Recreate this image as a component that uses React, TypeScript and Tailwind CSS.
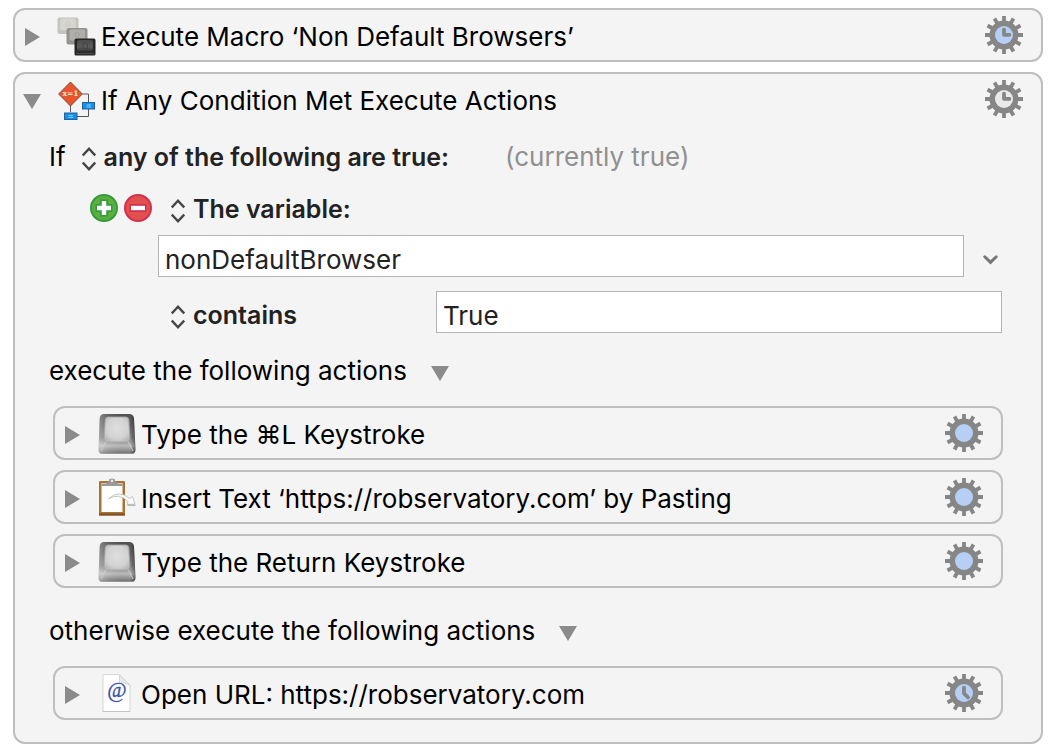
import { useState, type ReactNode } from "react";

type GearKind = "clock" | "plain" | "later";

const TEETH = [0, 30, 60, 90, 120, 150];

function GearIcon({ kind, face }: { kind: GearKind; face: string }) {
  return (
    <svg width="38" height="38" viewBox="0 0 38 38" fill="none">
      {TEETH.map((angle) => (
        <path
          key={angle}
          d="M19 0v38"
          stroke="#868686"
          strokeWidth="3.8"
          transform={`rotate(${angle} 19 19)`}
        />
      ))}
      <circle cx="19" cy="19" r="14.5" fill="#868686" />
      <circle cx="19" cy="19" r="9" fill={face} />
      {kind !== "plain" && (
        <path
          d={kind === "clock" ? "M19 13.6V18.8H24.4" : "M19 13.6V19.4L23 23.4"}
          stroke="#868686"
          strokeWidth="3.8"
          strokeLinecap="round"
          strokeLinejoin="round"
        />
      )}
    </svg>
  );
}

function Triangle({ open }: { open: boolean }) {
  return (
    <svg width="18" height="18" viewBox="0 0 18 18" fill="#8b8b8b">
      <path d={open ? "M0 2H18L9 17Z" : "M2 0L17 9L2 18Z"} />
    </svg>
  );
}

function UpDownIcon() {
  return (
    <svg
      width="14"
      height="24"
      viewBox="0 0 14 24"
      fill="none"
      stroke="#454545"
      strokeWidth="2.4"
    >
      <path d="M0.8 8.4L7 1.8L13.2 8.4M0.8 15.6L7 22.2L13.2 15.6" />
    </svg>
  );
}

function MacroIcon() {
  return (
    <svg width="40" height="40" viewBox="0 0 40 40">
      <defs>
        <linearGradient id="capDark" x1="0" y1="0" x2="0" y2="1">
          <stop offset="0" stopColor="#4a4a4a" />
          <stop offset="0.6" stopColor="#5c5c5c" />
          <stop offset="1" stopColor="#333" />
        </linearGradient>
      </defs>
      <rect x="0.5" y="1.5" width="21" height="16.5" rx="2" fill="#c4c3be" />
      <rect x="3" y="2.5" width="16" height="11.5" rx="2" fill="#d6d5d0" />
      <rect x="9" y="6" width="4" height="4" rx="1.5" fill="none" stroke="#c8c7c2" />
      <rect x="9.5" y="12" width="21" height="16.5" rx="2" fill="#94938f" />
      <rect x="12.5" y="13.5" width="15.5" height="11" rx="2" fill="#b0afab" />
      <rect x="18" y="16.5" width="4" height="4" rx="1.5" fill="none" stroke="#9e9d99" />
      <rect x="17.5" y="22.5" width="21" height="17" rx="1.5" fill="#262626" />
      <rect x="20" y="24" width="16" height="11.5" rx="2" fill="url(#capDark)" />
      <rect x="26" y="27" width="4.5" height="6" rx="2" fill="none" stroke="#444" />
      <path d="M19.5 37.5H37" stroke="#484848" strokeWidth="1.4" />
    </svg>
  );
}

function ConditionIcon() {
  return (
    <svg width="40" height="40" viewBox="0 0 40 40">
      <path
        d="M13.5 25V32M25.5 14H31.5V22M31.5 29V36.5H20"
        fill="none"
        stroke="#555"
      />
      <path d="M13.5 2L25.3 14L13.5 26L1.7 14Z" fill="#eb552d" stroke="#7a4a3c" />
      <text
        x="13.6"
        y="16.4"
        textAnchor="middle"
        fontSize="7.5"
        fontWeight="700"
        fill="#ffe5d9"
        fontFamily="'DejaVu Serif', serif"
      >
        x=1
      </text>
      <rect x="25.5" y="22.5" width="12" height="6.5" fill="#0a94fb" stroke="#2b5f8f" />
      <rect x="7.5" y="33" width="12.5" height="6.5" fill="#0a94fb" stroke="#2b5f8f" />
      <path d="M29.5 25H34M29.5 27H34M11.5 35.5H16M11.5 37.5H16" stroke="#8ccbff" />
    </svg>
  );
}

function KeyIcon() {
  return (
    <svg width="40" height="40" viewBox="0 0 40 40">
      <defs>
        <linearGradient id="keyBody" x1="0" y1="0" x2="0" y2="1">
          <stop offset="0" stopColor="#505050" />
          <stop offset="0.6" stopColor="#838383" />
          <stop offset="0.8" stopColor="#bcbcbc" />
          <stop offset="1" stopColor="#707070" />
        </linearGradient>
        <linearGradient id="keySides" x1="0" y1="0" x2="1" y2="0">
          <stop offset="0" stopColor="#fff" stopOpacity="0.3" />
          <stop offset="0.25" stopColor="#fff" stopOpacity="0.1" />
          <stop offset="0.85" stopColor="#000" stopOpacity="0" />
          <stop offset="1" stopColor="#000" stopOpacity="0.4" />
        </linearGradient>
        <radialGradient id="keyTop" cx="0.5" cy="0.45" r="0.6">
          <stop offset="0" stopColor="#dfdfdf" />
          <stop offset="0.7" stopColor="#d2d2d2" />
          <stop offset="1" stopColor="#bababa" />
        </radialGradient>
      </defs>
      <path
        d="M7 0H32Q36.5 0 37 4.5L38.5 35Q38.7 39.8 35 39.8H5Q1.3 39.8 1.5 35L2.7 4.5Q3 0 7 0Z"
        fill="url(#keyBody)"
      />
      <path
        d="M7 0H32Q36.5 0 37 4.5L38.5 35Q38.7 39.8 35 39.8H5Q1.3 39.8 1.5 35L2.7 4.5Q3 0 7 0Z"
        fill="url(#keySides)"
      />
      <path d="M8.5 28L4 37M31.5 28L36 37" stroke="#cfcfcf" strokeWidth="1" />
      <path
        d="M11 3H29Q31.6 3 31.8 6L32.8 23Q33 28 29 28H11Q7 28 7.2 23L8.2 6Q8.4 3 11 3Z"
        fill="url(#keyTop)"
        stroke="#a8a8a8"
        strokeWidth="0.8"
      />
    </svg>
  );
}

function ClipboardIcon() {
  return (
    <svg width="40" height="40" viewBox="0 0 40 40">
      <rect x="2" y="3" width="26" height="34.5" rx="1" fill="#a87336" />
      <path d="M2 35.5H28V37.5H2Z" fill="#7b4f20" />
      <path d="M4.5 5H25.5V34H4.5Z" fill="#fff" />
      <path d="M4.5 8V5.5H9L12 3.5V1.5Q15 -0.5 18 1.5V3.5L21 5.5H25.5V8Z" fill="#999" />
      <circle cx="15" cy="2.8" r="1.2" fill="#eee" />
      <path
        d="M11.5 20.8Q22 11 32.5 20.5L35.5 18.5L38 26L30.5 26.5L31 23.5Q22 14.5 11.5 20.8Z"
        fill="#fbfbfb"
        stroke="#b8b8b8"
        strokeWidth="0.8"
      />
      <path d="M30.5 27.2H38.5" stroke="#9b9b9b" />
    </svg>
  );
}

function UrlIcon() {
  return (
    <svg width="40" height="40" viewBox="0 0 40 40">
      <path d="M6 0.5H22L33 11V37.5H6Z" fill="#fff" stroke="#d5d5d5" />
      <path d="M5.5 37.5H33.5" stroke="#c4c4c4" />
      <path d="M22.5 1L32.5 11Q27 8 22.5 9Z" fill="#e9e9e9" stroke="#cfcfcf" strokeWidth="0.8" />
      <text
        x="19.8"
        y="23"
        textAnchor="middle"
        fontSize="21"
        fill="#3a4fa5"
        stroke="#3a4fa5"
        strokeWidth="0.3"
        fontFamily="'Liberation Serif', serif"
      >
        @
      </text>
    </svg>
  );
}

interface HeaderProps {
  icon: ReactNode;
  title: string;
  gear: GearKind;
  face?: string;
  defaultOpen?: boolean;
}

function ActionHeader({
  icon,
  title,
  gear,
  face = "#b5cff5",
  defaultOpen = false,
}: HeaderProps) {
  const [open, setOpen] = useState(defaultOpen);

  return (
    <div className="flex h-[50px] items-center justify-between pr-[18px] pl-2">
      <div className="flex min-w-0 items-center pt-1">
        <button
          type="button"
          aria-label={`Toggle ${title}`}
          aria-expanded={open}
          onClick={() => setOpen(!open)}
          className="shrink-0"
        >
          <Triangle open={open} />
        </button>
        <span className="mr-1 ml-4 shrink-0 pb-0.5">{icon}</span>
        <h2 className="truncate">{title}</h2>
      </div>
      <button type="button" aria-label={`Options for ${title}`} className="shrink-0">
        <GearIcon kind={gear} face={face} />
      </button>
    </div>
  );
}

function Card({ children }: { children: ReactNode }) {
  return (
    <section className="rounded-xl border-2 border-[#bebebe] bg-[#f4f4f4]">
      {children}
    </section>
  );
}

function Popup({ label, options }: { label: string; options: string[] }) {
  return (
    <label className="flex items-center gap-2">
      <span className="pt-1">
        <UpDownIcon />
      </span>
      <select
        aria-label={label}
        className="field-sizing-content appearance-none bg-transparent text-[25px] font-semibold text-[#222] outline-none"
      >
        {options.map((option) => (
          <option key={option}>{option}</option>
        ))}
      </select>
    </label>
  );
}

function SectionToggle({ text }: { text: string }) {
  const [open, setOpen] = useState(true);

  return (
    <div className="flex h-[52px] items-center gap-6 pl-[34px]">
      <span>{text}</span>
      <button
        type="button"
        aria-label={`Toggle ${text}`}
        aria-expanded={open}
        onClick={() => setOpen(!open)}
        className="pt-1"
      >
        <Triangle open={open} />
      </button>
    </div>
  );
}

export default function App() {
  const [variable, setVariable] = useState("nonDefaultBrowser");
  const [value, setValue] = useState("True");

  return (
    <main className="flex min-h-screen flex-col gap-[10px] bg-white px-[13px] pt-2 pb-[10px] font-['Inter',sans-serif] text-[26px] leading-8 text-black">
      <Card>
        <ActionHeader
          icon={<MacroIcon />}
          title="Execute Macro ‘Non Default Browsers’"
          gear="clock"
        />
      </Card>

      <Card>
        <ActionHeader
          icon={<ConditionIcon />}
          title="If Any Condition Met Execute Actions"
          gear="clock"
          face="#e9e9e9"
          defaultOpen
        />

        <div className="mt-[7px] flex h-[52px] items-center pl-[34px]">
          <span className="mr-4">If</span>
          <Popup
            label="Match"
            options={["any of the following are true:", "all of the following are true:"]}
          />
          <span className="ml-14 text-[#909090]">(currently true)</span>
        </div>

        <div className="flex h-[52px] items-center pl-[75px]">
          <div className="mr-[19px] flex gap-[6px] pb-0.5">
            <button type="button" aria-label="Add condition">
              <svg width="28" height="28" viewBox="0 0 28 28">
                <circle cx="14" cy="14" r="13" fill="#5bb03c" stroke="#379a41" strokeWidth="2" />
                <path d="M14 5.5V22.5M5.5 14H22.5" stroke="#379a41" strokeWidth="8" />
                <path d="M14 7V21M7 14H21" stroke="#fff" strokeWidth="4.4" />
              </svg>
            </button>
            <button type="button" aria-label="Remove condition">
              <svg width="28" height="28" viewBox="0 0 28 28">
                <circle cx="14" cy="14" r="13" fill="#e0504e" stroke="#d52f50" strokeWidth="2" />
                <path d="M5.5 14H22.5" stroke="#d52f50" strokeWidth="8" />
                <path d="M7 14H21" stroke="#fff" strokeWidth="4.4" />
              </svg>
            </button>
          </div>
          <Popup label="Condition type" options={["The variable:", "The text:"]} />
        </div>

        <div className="flex items-center pr-[38px] pl-[143px]">
          <input
            type="text"
            aria-label="Variable name"
            value={variable}
            onChange={(e) => setVariable(e.target.value)}
            className="h-[42px] min-w-0 flex-1 border border-[#b4b4b4] bg-white px-[6px] pt-1.5 text-[#222] outline-none"
          />
          <button
            type="button"
            aria-label="Choose variable"
            className="flex w-[39px] justify-end pt-[7px] pr-[5px]"
          >
            <svg
              width="15"
              height="10"
              viewBox="0 0 15 10"
              fill="none"
              stroke="#777"
              strokeWidth="3"
              strokeLinecap="round"
            >
              <path d="M1.8 1.8L7.5 7.4L13.2 1.8" />
            </svg>
          </button>
        </div>

        <div className="mt-[14px] flex items-center pr-[39px] pl-[156px]">
          <div className="w-[265px] shrink-0 pt-1.5">
            <Popup label="Comparison" options={["contains", "is", "is not"]} />
          </div>
          <input
            type="text"
            aria-label="Comparison value"
            value={value}
            onChange={(e) => setValue(e.target.value)}
            className="h-[42px] min-w-0 flex-1 border border-[#b4b4b4] bg-white px-[6px] pt-1.5 text-[#222] outline-none"
          />
        </div>

        <div className="mt-3">
          <SectionToggle text="execute the following actions" />
        </div>
        <div className="mt-[9px] flex flex-col gap-[10px] px-[38px]">
          <Card>
            <ActionHeader icon={<KeyIcon />} title="Type the ⌘L Keystroke" gear="plain" />
          </Card>
          <Card>
            <ActionHeader
              icon={<ClipboardIcon />}
              title="Insert Text ‘https://robservatory.com’ by Pasting"
              gear="plain"
            />
          </Card>
          <Card>
            <ActionHeader icon={<KeyIcon />} title="Type the Return Keystroke" gear="plain" />
          </Card>
        </div>

        <div className="mt-[17px]">
          <SectionToggle text="otherwise execute the following actions" />
        </div>
        <div className="mt-[9px] px-[38px] pb-[22px]">
          <Card>
            <ActionHeader
              icon={<UrlIcon />}
              title="Open URL: https://robservatory.com"
              gear="later"
            />
          </Card>
        </div>
      </Card>
    </main>
  );
}
